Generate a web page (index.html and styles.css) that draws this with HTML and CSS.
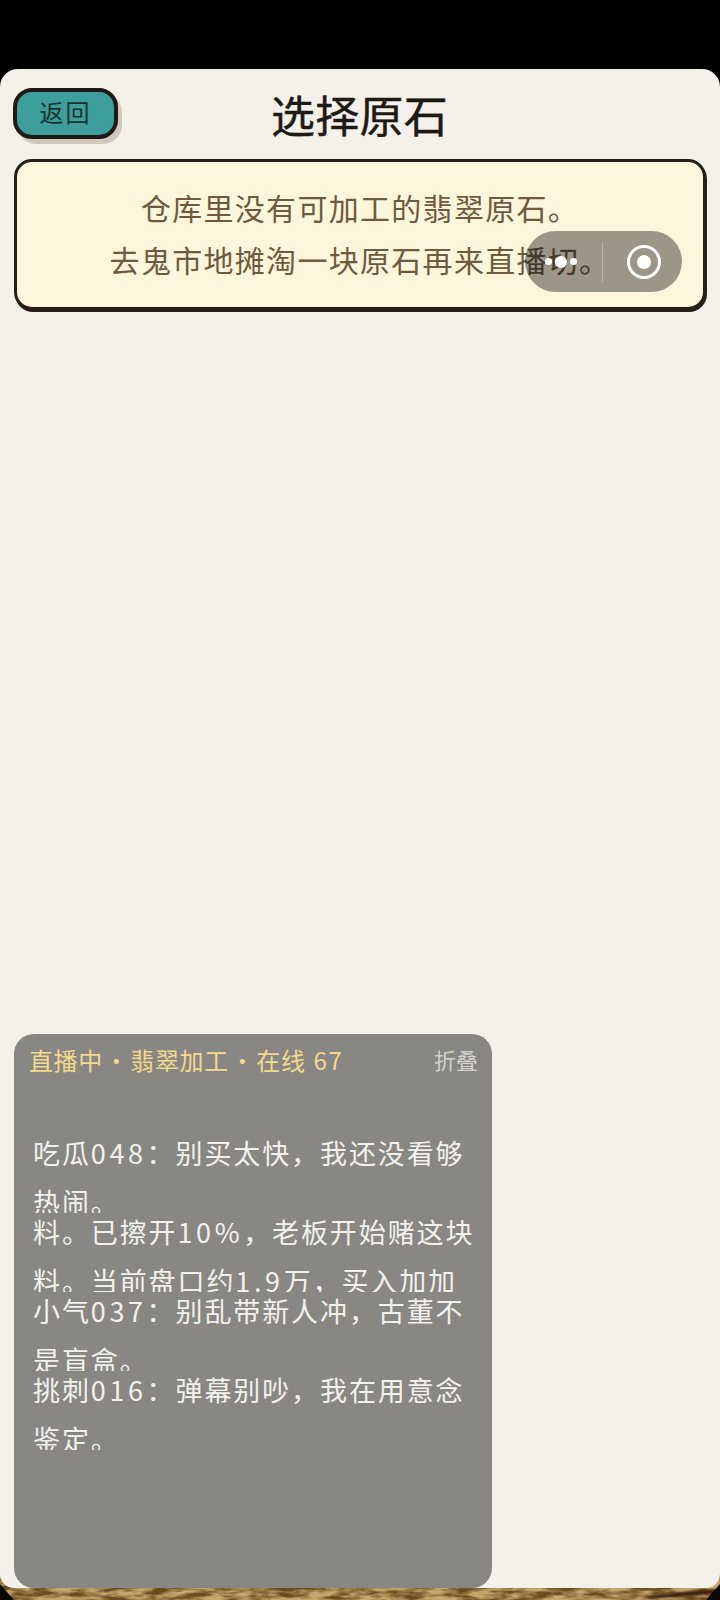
FILE: index.html
```html
<!DOCTYPE html>
<html lang="zh-CN">
<head>
<meta charset="utf-8">
<title>选择原石</title>
<link rel="stylesheet" href="styles.css">
</head>
<body>
<div class="stage">
  <svg class="wood" viewBox="0 0 720 40" preserveAspectRatio="none" aria-hidden="true">
    <defs>
      <filter id="grain" x="0" y="0" width="100%" height="100%" color-interpolation-filters="sRGB">
        <feTurbulence type="fractalNoise" baseFrequency="0.04 0.16" numOctaves="4" seed="11"/>
        <feColorMatrix type="matrix" values="0 0 0 0 .42  0 0 0 0 .29  0 0 0 0 .12  3 0 0 0 -1.05"/>
        <feGaussianBlur stdDeviation="0.5"/>
      </filter>
      <filter id="soft"><feGaussianBlur stdDeviation="0.8"/></filter>
    </defs>
    <rect width="720" height="40" fill="#c4a66e"/>
    <rect width="720" height="40" filter="url(#grain)"/>
    <path class="streak" d="M640 37 Q670 34 700 30 L720 29 L720 34 Q680 36 650 39 Z" filter="url(#soft)"/>
    <path class="edge" d="M0 24 L14 40 L0 40 Z"/>
    <path class="edge" d="M720 24 L706 40 L720 40 Z"/>
  </svg>
  <main class="panel">
    <header class="topbar">
      <button class="back"><span class="back-label">返回</span></button>
      <h1 class="title">选择原石</h1>
      <span></span>
    </header>
    <section class="notice">
      <p>仓库里没有可加工的翡翠原石。</p>
      <p>去鬼市地摊淘一块原石再来直播切。</p>
    </section>
    <section class="live">
      <div class="live-head">
        <span class="live-status">直播中 · 翡翠加工 · 在线<span class="live-count">67</span></span>
        <span class="live-fold">折叠</span>
      </div>
      <div class="live-feed">
        <p class="msg">吃瓜<span class="num">048</span>&#xFF1A;别买太快&#xFF0C;我还没看够<br>热闹。</p>
        <p class="msg">料。已擦开<span class="num">10%</span>&#xFF0C;老板开始赌这块<br>料。当前盘口约<span class="num">1.9</span>万&#xFF0C;买入加加</p>
        <p class="msg">小气<span class="num">037</span>&#xFF1A;别乱带新人冲&#xFF0C;古董不<br>是盲盒。</p>
        <p class="msg">挑刺<span class="num">016</span>&#xFF1A;弹幕别吵&#xFF0C;我在用意念<br>鉴定。</p>
      </div>
    </section>
  </main>
  <div class="capsule" aria-hidden="true">
    <div class="dots"><i class="dot"></i><i class="dot dot-big"></i><i class="dot"></i></div>
    <b class="rule"></b>
    <svg class="target" width="36" height="36" viewBox="0 0 36 36">
      <circle cx="18" cy="18" r="15.5" fill="none" stroke="#fff" stroke-width="3"/>
      <circle cx="18" cy="18" r="7" fill="#fff"/>
    </svg>
  </div>
</div>
</body>
</html>
```
FILE: styles.css
```css
* { box-sizing: border-box; }
html, body { margin: 0; height: 1600px; background: #000; overflow: hidden; }
body { font-family: "Noto Sans CJK SC", "Noto Sans", sans-serif; }
.stage { position: relative; width: 720px; height: 1600px; padding: 69px 0 12px; display: flex; }
.wood { position: absolute; left: 0; bottom: 0; width: 720px; height: 40px; }
.streak { fill: #3a2410; }
.edge { fill: #0c0803; }
.panel {
  position: relative; flex: 1; display: flex; flex-direction: column;
  background: #f4f1ea; border-radius: 18px 18px 14px 14px; padding: 19px 14px 0;
}
.topbar { display: grid; grid-template-columns: 1fr auto 1fr; align-items: center; height: 51px; margin-left: -1px; }
.back {
  width: 105px; height: 51px; padding: 0 0 4px; border: 4px solid #1e1a16; border-radius: 19px;
  background: #3e9e9b; color: #163331; font: inherit; font-size: 24px; letter-spacing: 2px; line-height: 1;
  box-shadow: 4px 5px 0 rgba(70, 40, 20, .2);
}
.title { margin: 0 0 -1px; font-size: 44px; font-weight: 400; line-height: 50px; letter-spacing: .3px; color: #1e1a16; -webkit-text-stroke: .4px #1e1a16; }
.notice {
  margin-top: 20px; height: 151px; padding: 19px 0 0; text-align: center;
  background: #fdf5dc; border: 3px solid #2a1f17; border-radius: 18px; box-shadow: 1px 2px 0 #2a1f17;
  color: #6f5a40; font-size: 30px; letter-spacing: 1.3px; line-height: 52px;
}
.notice p { margin: 0; }
.live {
  margin-top: auto; width: 478px; height: 554px; padding: 7px 14px 0 15px;
  background: #888784; border-radius: 20px; 
}
.live-head { display: flex; justify-content: space-between; align-items: center; height: 36px; }
.live-status { font-size: 24px; letter-spacing: .6px; word-spacing: -4.5px; color: #f3d98b; white-space: nowrap; }
.live-count { margin-left: 8px; letter-spacing: 1.6px; }
.live-fold { font-size: 22px; color: #d2d0ca; }
.live-feed { margin-top: 52px; padding-left: 4px; color: #f2f1ec; font-size: 27px; letter-spacing: 1.9px; line-height: 48.5px; }
.msg { margin: 0 0 -5px; height: 84px; overflow: hidden; white-space: nowrap; }
.num { letter-spacing: 3.6px; }
.capsule {
  position: absolute; left: 525px; top: 231px; width: 157px; height: 61px; border-radius: 31px;
  background: rgba(0, 0, 0, .39); display: flex; align-items: center;
}
.dots { width: 72px; margin-right: 5px; display: flex; justify-content: center; align-items: center; gap: 3px; }
.dot { width: 7px; height: 7px; border-radius: 50%; background: #fff; }
.dot-big { width: 12px; height: 12px; }
.rule { width: 1px; height: 40px; background: rgba(255, 255, 255, .25); }
.target { margin-left: 23px; }
```
